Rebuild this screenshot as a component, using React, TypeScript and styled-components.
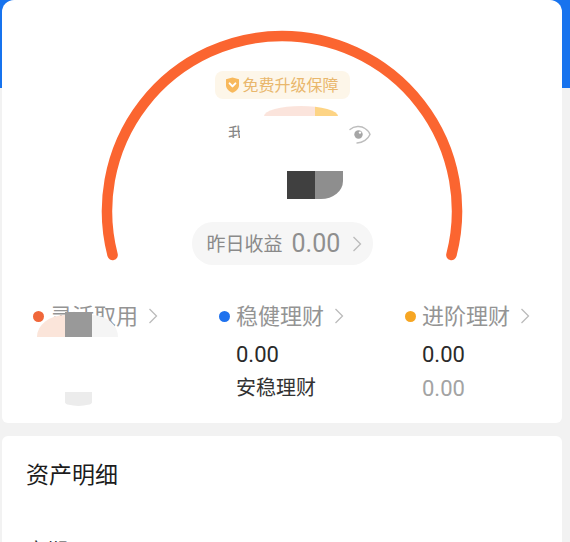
import React from 'react';
import styled, { createGlobalStyle } from 'styled-components';

const GlobalStyle = createGlobalStyle`
  html, body {
    margin: 0;
    padding: 0;
    background: #f2f2f2;
    overflow: hidden;
  }
  * {
    box-sizing: border-box;
  }
`;

type Product = {
  dot: string;
  name: string;
  value?: string;
  subName?: string;
  subValue?: string;
};

const products: Product[] = [
  { dot: '#f0673a', name: '灵活取用' },
  { dot: '#1f72ee', name: '稳健理财', value: '0.00', subName: '安稳理财' },
  { dot: '#f6a623', name: '进阶理财', value: '0.00', subValue: '0.00' },
];

const Chevron = () => (
  <StChevron viewBox="0 0 10 16">
    <path d="M1.5 1 L8.5 8 L1.5 15" />
  </StChevron>
);

const ShieldIcon = () => (
  <svg width="15" height="16" viewBox="0 0 15 16">
    <path d="M1 2.2 L7.5 0.5 L14 2.2 V8.2 C14 11.8 11 14.4 7.5 15.8 C4 14.4 1 11.8 1 8.2 Z" fill="#f8b95c" />
    <path d="M4.6 6.4 L7.5 9.4 L10.4 6.4" fill="none" stroke="#fff" strokeWidth="2" strokeLinecap="round" strokeLinejoin="round" />
  </svg>
);

const EyeIcon = () => (
  <svg width="22" height="20" viewBox="0 0 22 20">
    <path d="M1 4.5 C5 1 12 0.5 16 3.5 C18.5 5.2 20.5 7.5 21 9.5 C19 14 14 18 8 18" fill="none" stroke="#bdbdbd" strokeWidth="1.4" strokeLinecap="round" />
    <circle cx="9.5" cy="9.5" r="4.2" fill="#a6a6a6" />
    <circle cx="11" cy="7.6" r="1.2" fill="#fff" />
  </svg>
);

const App = () => {
  return (
    <StPage>
      <GlobalStyle />
      <StOverviewCard>
        <StGauge>
          <StArc viewBox="0 0 560 300">
            <path d="M110.6 255 A175 175 0 1 1 449.4 255" />
          </StArc>
          <StBadge>
            <ShieldIcon />
            <StBadgeText>免费升级保障</StBadgeText>
          </StBadge>
          <StBlob />
          <StNameRow>
            <StClippedName>我</StClippedName>
            <EyeIcon />
          </StNameRow>
          <StMosaic>
            <StMosaicCell $color="#404040" />
            <StMosaicCell $color="#8e8e8e" $curved />
          </StMosaic>
          <StPill>
            <StPillLabel>昨日收益</StPillLabel>
            <StPillValue>0.00</StPillValue>
            <Chevron />
          </StPill>
        </StGauge>
        <StProducts>
          {products.map((item, index) => (
            <StProduct key={item.name}>
              <StProductHead>
                <StDot $color={item.dot} />
                <StProductName>{item.name}</StProductName>
                <Chevron />
              </StProductHead>
              {item.value && <StValue>{item.value}</StValue>}
              {item.subName && <StSubName>{item.subName}</StSubName>}
              {item.subValue && <StSubValue>{item.subValue}</StSubValue>}
              {index === 0 && (
                <>
                  <StCoverPeach />
                  <StCoverGray />
                  <StCoverLight />
                  <StCoverLower />
                </>
              )}
            </StProduct>
          ))}
        </StProducts>
      </StOverviewCard>
      <StDetailCard>
        <StDetailTitle>资产明细</StDetailTitle>
        <StDetailRow>定期</StDetailRow>
      </StDetailCard>
    </StPage>
  );
};

export default App;

const StPage = styled.div`
  width: 570px;
  height: 542px;
  padding: 0 8px 0 2px;
  overflow: hidden;
  background: linear-gradient(#1773ee 0 88px, #f2f2f2 88px);
  font-family: 'Noto Sans CJK SC', 'Noto Sans', sans-serif;
`;

const StOverviewCard = styled.div`
  height: 423px;
  background: #fff;
  border-radius: 12px 12px 6px 6px;
`;

const StGauge = styled.div`
  position: relative;
  height: 265px;
  padding-top: 71px;
  display: flex;
  flex-direction: column;
  align-items: center;
`;

const StArc = styled.svg`
  position: absolute;
  top: 0;
  left: 0;
  width: 560px;
  height: 300px;

  path {
    fill: none;
    stroke: #fb6530;
    stroke-width: 10.5;
    stroke-linecap: round;
  }
`;

const StBadge = styled.div`
  width: 135px;
  height: 28px;
  display: flex;
  align-items: center;
  gap: 3px;
  padding-left: 10px;
  border-radius: 8px;
  background: #fdf6e9;
  color: #e9b76c;
  font-size: 16px;
  white-space: nowrap;
`;

const StBadgeText = styled.span`
  margin-bottom: 2px;
`;

const StBlob = styled.div`
  width: 74px;
  height: 10px;
  margin: 7px 0 0 38px;
  border-radius: 37px 37px 0 0 / 10px 10px 0 0;
  background: linear-gradient(90deg, #fbe4dc 0 51px, #fdd485 51px);
`;

const StNameRow = styled.div`
  width: 143px;
  height: 19px;
  margin: 9px 0 0 35px;
  display: flex;
  justify-content: space-between;
  align-items: flex-start;
`;

const StClippedName = styled.span`
  width: 12px;
  height: 13px;
  overflow: hidden;
  color: #888;
  font-size: 17px;
  line-height: 16px;
`;

const StMosaic = styled.div`
  margin: 27px 0 0 66px;
  display: flex;
`;

const StMosaicCell = styled.div<{ $color: string; $curved?: boolean }>`
  width: 28px;
  height: 28px;
  background: ${(props) => props.$color};
  border-bottom-right-radius: ${(props) => (props.$curved ? '22px 18px' : '0')};
`;

const StPill = styled.div`
  width: 181px;
  height: 43px;
  margin-top: 23px;
  padding-left: 15px;
  display: flex;
  align-items: center;
  border-radius: 21px;
  background: #f6f6f6;
`;

const StPillLabel = styled.span`
  margin-bottom: 2px;
  color: #8a8a8a;
  font-size: 19px;
  white-space: nowrap;
`;

const StPillValue = styled.span`
  margin: 0 12px 0 9px;
  color: #8f8f8f;
  font-family: Roboto, sans-serif;
  font-size: 25px;
`;

const StChevron = styled.svg`
  width: 10px;
  height: 16px;
  flex-shrink: 0;

  path {
    fill: none;
    stroke: #bbb;
    stroke-width: 1.3;
  }
`;

const StProducts = styled.div`
  display: grid;
  grid-template-columns: repeat(3, 186px);
  padding: 34px 0 0 31px;
`;

const StProduct = styled.div`
  position: relative;
  display: flex;
  flex-direction: column;
`;

const StProductHead = styled.div`
  height: 34px;
  display: flex;
  align-items: center;
`;

const StDot = styled.span<{ $color: string }>`
  width: 11px;
  height: 11px;
  margin-right: 6px;
  border-radius: 50%;
  background: ${(props) => props.$color};
`;

const StProductName = styled.span`
  margin: 0 10px 4px 0;
  color: #949494;
  font-size: 22px;
  white-space: nowrap;
`;

const StValue = styled.div`
  height: 38px;
  padding-left: 17px;
  color: #2a2a2a;
  font-family: Roboto, sans-serif;
  font-size: 22px;
  line-height: 44px;
`;

const StSubName = styled.div`
  height: 32px;
  padding-left: 17px;
  color: #333;
  font-size: 20px;
  line-height: 32px;
`;

const StSubValue = styled.div`
  height: 32px;
  padding-left: 17px;
  color: #a3a3a3;
  font-family: Roboto, sans-serif;
  font-size: 22px;
  line-height: 36px;
`;

const StCoverPeach = styled.div`
  position: absolute;
  top: 16px;
  left: 4px;
  width: 28px;
  height: 22px;
  background: #fbe5da;
  border-top-left-radius: 28px 22px;
`;

const StCoverGray = styled.div`
  position: absolute;
  top: 13px;
  left: 32px;
  width: 27px;
  height: 25px;
  background: #999;
`;

const StCoverLight = styled.div`
  position: absolute;
  top: 16px;
  left: 59px;
  width: 26px;
  height: 22px;
  background: #f5f5f5;
  border-top-right-radius: 26px 22px;
`;

const StCoverLower = styled.div`
  position: absolute;
  top: 93px;
  left: 32px;
  width: 27px;
  height: 14px;
  background: #ececec;
  border-radius: 0 0 14px 14px / 0 0 4px 4px;
`;

const StDetailCard = styled.div`
  height: 120px;
  margin-top: 13px;
  padding: 0 24px;
  background: #fff;
  border-radius: 6px 6px 0 0;
`;

const StDetailTitle = styled.div`
  height: 78px;
  color: #1c1c1c;
  font-size: 23px;
  line-height: 74px;
`;

const StDetailRow = styled.div`
  margin-top: 20px;
  color: #333;
  font-size: 21px;
  line-height: 30px;
`;
